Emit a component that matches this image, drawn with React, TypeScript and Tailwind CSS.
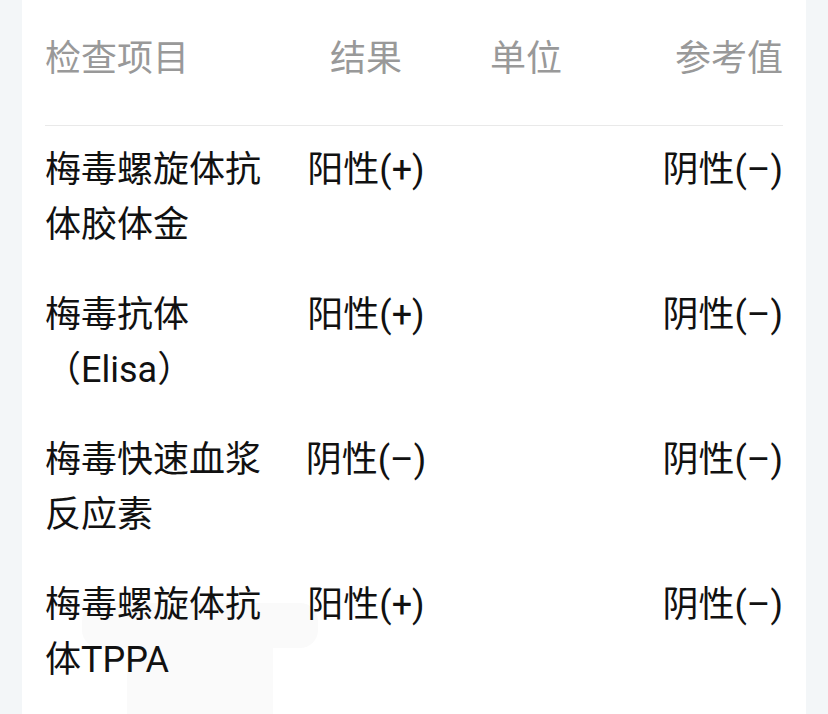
const rows = [
  { name: "梅毒螺旋体抗体胶体金", result: "阳性(+)", unit: "", ref: "阴性(–)" },
  { name: "梅毒抗体（Elisa）", result: "阳性(+)", unit: "", ref: "阴性(–)" },
  { name: "梅毒快速血浆反应素", result: "阴性(–)", unit: "", ref: "阴性(–)" },
  { name: "梅毒螺旋体抗体TPPA", result: "阳性(+)", unit: "", ref: "阴性(–)" },
];

export default function App() {
  return (
    <div
      className="h-[714px] overflow-hidden bg-[#f3f6f8] px-[22px]"
      style={{ fontFamily: 'Roboto, "Noto Sans CJK SC", sans-serif' }}
    >
      <div className="relative h-full bg-white px-[23px]">
        {/* faint watermark behind the last row */}
        <div className="pointer-events-none absolute left-[60px] top-[603px] h-[45px] w-[236px] rounded-[18px] bg-[#fafafa]" />
        <div className="pointer-events-none absolute left-[105px] top-[648px] h-[66px] w-[146px] bg-[#fafafa]" />

        <div className="relative flex pt-[32px] pb-[38px] text-[36px] leading-[55px] text-[#999999]">
          <div className="w-[230px] shrink-0">检查项目</div>
          <div className="w-[182px] shrink-0 text-center">结果</div>
          <div className="w-[138px] shrink-0 text-center">单位</div>
          <div className="flex-1 text-right">参考值</div>
        </div>
        <div className="relative h-px bg-[#e9e9e9]" />

        <div className="relative flex flex-col gap-[35px] pt-[17px] text-[36px] leading-[55px] text-[#111111]">
          {rows.map((r) => (
            <div key={r.name} className="flex">
              <div className="w-[230px] shrink-0">{r.name}</div>
              <div className="w-[182px] shrink-0 text-center">{r.result}</div>
              <div className="w-[138px] shrink-0 text-center">{r.unit}</div>
              <div className="flex-1 text-right">{r.ref}</div>
            </div>
          ))}
        </div>
      </div>
    </div>
  );
}
